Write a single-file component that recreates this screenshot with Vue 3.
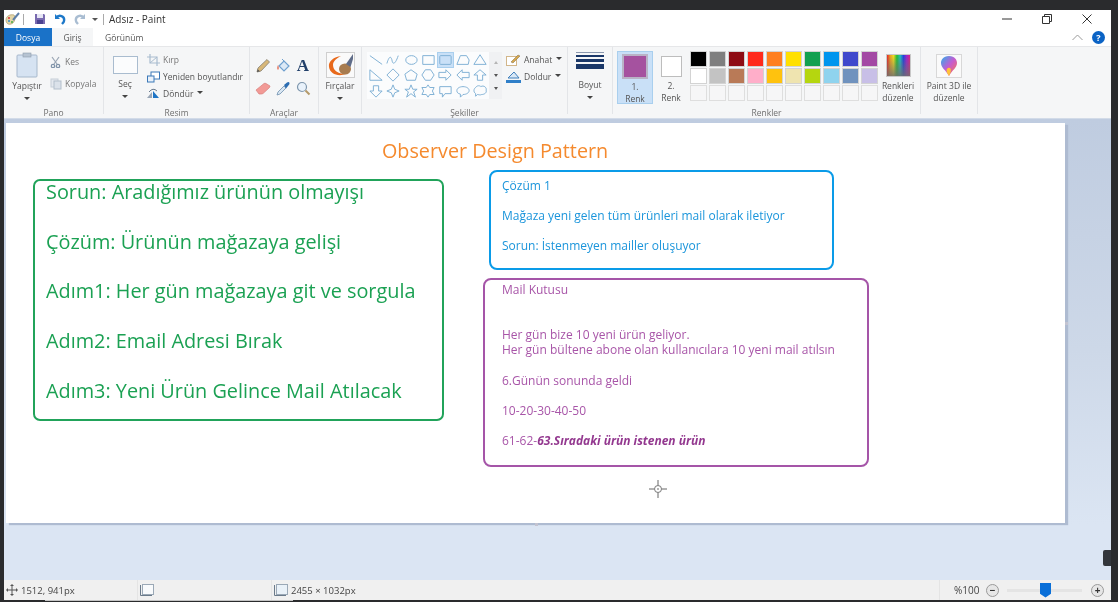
<script setup>
const shapes = [
  'M2 3L16 13', 'M2 12C5 2 7 4 8 9S12 12 15 3', 'M3 8a6.5 5 0 1 0 13 0a6.5 5 0 1 0-13 0Z', 'M3 3H16V13H3Z', 'M3 4Q3 3 4 3H15Q16 3 16 4V12Q16 13 15 13H4Q3 13 3 12Z', 'M2 13L6 3H13L16 8L15 13Z', 'M9 2L16 13H2Z',
  'M2 2L16 14H2Z', 'M9 1L16 8L9 15L2 8Z', 'M9 2L16 7L14 14H4L2 7Z', 'M6 2H12L16 8L12 14H6L2 8Z', 'M2 5H10V2L16 8L10 14V11H2Z', 'M16 5H8V2L2 8L8 14V11H16Z', 'M9 2L16 8H12V14H6V8H2Z',
  'M6 2H12V8H16L9 15L2 8H6Z', 'M9 1L11 6L16 8L11 10L9 15L7 10L2 8L7 6Z', 'M9 1L11 6H16L12 9L14 15L9 11L4 15L6 9L2 6H7Z', 'M9 1L11 4H16L14 8L16 12H11L9 15L7 12H2L4 8L2 4H7Z', 'M3 3H16V11H9L6 15V11H3Z', 'M9 3C13 3 16 5 16 7.500S13 12 9 12L6 15V11.500C3 11 2 9.500 2 7.500C2 5 5 3 9 3Z', 'M4 4C6 1 9 2 10 3C13 1 17 4 16 7C17 10 14 12 11 12C9 13 7 12 6 12L4 14V11C1 9 2 5 4 4Z'
]
const colours = [
  '#000000', '#7f7f7f', '#8e0c14', '#ff2a1c', '#ff7f1f', '#ffe000', '#12a050', '#0095ee', '#3f48cc', '#a349a4',
  '#ffffff', '#c3c3c3', '#b97a57', '#ffaec9', '#ffc20e', '#efe4b0', '#b5d60f', '#8fd3ee', '#7092be', '#c8bfe7',
  '', '', '', '', '', '', '', '', '', ''
]
const greenText = `Sorun: Aradığımız ürünün olmayışı

Çözüm: Ürünün mağazaya gelişi

Adım1: Her gün mağazaya git ve sorgula

Adım2: Email Adresi Bırak

Adım3: Yeni Ürün Gelince Mail Atılacak`
const blueText = `Çözüm 1

Mağaza yeni gelen tüm ürünleri mail olarak iletiyor

Sorun: İstenmeyen mailler oluşuyor`
const mailText = `Mail Kutusu


Her gün bize 10 yeni ürün geliyor.
Her gün bültene abone olan kullanıcılara 10 yeni mail atılsın

6.Günün sonunda geldi

10-20-30-40-50

61-62-`
</script>

<template>
  <div class="screen">
    <div class="window">
      <div class="titlebar">
        <svg class="qa-app" width="15" height="14" viewBox="0 0 15 14"><path d="M1 8C1 4 5 2 9 3C11 5 10 11 6 12C3 13 1 11 1 8Z" fill="#e3d6a8" stroke="#a9986a" stroke-width=".7"/><path d="M8 8L14 1" stroke="#5d7fa8" stroke-width="2"/><circle cx="4" cy="6" r="1" fill="#d33"/><circle cx="4" cy="9" r="1" fill="#38c"/><circle cx="7" cy="10" r="1" fill="#4a4"/></svg>
        <span class="qa-sep"></span>
        <svg class="qa-save" width="12" height="12" viewBox="0 0 12 12"><path d="M1 1H10L11 2V11H1Z" fill="#7a6bb0"/><path d="M3 1H9V5H3Z" fill="#e6e6f4"/><path d="M3 7H9V11H3Z" fill="#4b4290"/></svg>
        <svg class="qa-undo" width="12" height="12" viewBox="0 0 12 12"><path d="M1 1V6H6" fill="#1d78c9"/><path d="M2 5C5 1 11 3 10 8C10 9 9 10 8 11" fill="none" stroke="#1d78c9" stroke-width="2.400"/></svg>
        <svg class="qa-redo" width="12" height="12" viewBox="0 0 12 12"><path d="M11 1V6H6" fill="#a9bdd2"/><path d="M10 5C7 1 1 3 2 8C2 9 3 10 4 11" fill="none" stroke="#a9bdd2" stroke-width="2.400"/></svg>
        <span class="qa-more"></span>
        <span class="qa-sep qa-sep-last"></span>
        <span class="app-title">Adsız - Paint</span>
        <div class="win-controls">
          <svg width="10" height="10" viewBox="0 0 10 10"><path d="M0 5H10" stroke="#333" stroke-width="1"/></svg>
          <svg width="10" height="10" viewBox="0 0 10 10"><path d="M.5 2.500H7.500V9.500H.5ZM2.500 2.500V.5H9.500V7.500H7.500" fill="none" stroke="#333"/></svg>
          <svg width="10" height="10" viewBox="0 0 10 10"><path d="M.5 .5L9.500 9.500M9.500 .5L.5 9.500" stroke="#333"/></svg>
        </div>
      </div>

      <div class="tabs">
        <span class="tab tab-file">Dosya</span>
        <span class="tab tab-active">Giriş</span>
        <span class="tab tab-view">Görünüm</span>
        <svg class="collapse" width="11" height="7" viewBox="0 0 11 7"><path d="M.5 6L5.500 1L10.500 6" fill="none" stroke="#9a9a9a"/></svg>
        <span class="help">?</span>
      </div>

      <div class="ribbon">
        <section class="group g-pano">
          <div class="group-body">
            <div class="big-btn paste">
              <svg width="22" height="26" viewBox="0 0 22 26"><rect x="1" y="3" width="20" height="22" rx="1" fill="#d6e3f2" stroke="#a7b8cc"/><rect x="7" y="1" width="8" height="4" fill="#b6c3d2" stroke="#8e9cac" stroke-width=".6"/></svg>
              <span class="big-label">Yapıştır</span>
              <span class="caret"></span>
            </div>
            <div class="small-col faded">
              <div class="small-row"><svg width="11" height="12" viewBox="0 0 11 12"><path d="M2 1L7 8M9 1L4 8" stroke="#9aa6b4" stroke-width="1.200"/><circle cx="3" cy="10" r="1.700" fill="none" stroke="#7f92a8" stroke-width="1.200"/><circle cx="8" cy="10" r="1.700" fill="none" stroke="#7f92a8" stroke-width="1.200"/></svg>Kes</div>
              <div class="small-row"><svg width="12" height="12" viewBox="0 0 12 12"><rect x="1" y="1" width="7" height="8" fill="#e4e9ef" stroke="#c6ced8"/><rect x="4" y="3" width="7" height="8" fill="#dbe2ea" stroke="#b3bfcc"/></svg>Kopyala</div>
            </div>
          </div>
          <span class="group-label">Pano</span>
        </section>

        <section class="group g-resim">
          <div class="group-body">
            <div class="big-btn select">
              <span class="select-box"></span>
              <span class="big-label">Seç</span>
              <span class="caret"></span>
            </div>
            <div class="small-col resim-col">
              <div class="small-row faded"><svg width="13" height="12" viewBox="0 0 13 12"><path d="M3 0V9H13M0 3H10V12" fill="none" stroke="#a9bccf" stroke-width="1.200"/><path d="M3 9L10 3" stroke="#a9bccf"/></svg>Kırp</div>
              <div class="small-row"><svg width="13" height="12" viewBox="0 0 13 12"><rect x="4" y="1" width="8.500" height="7" fill="#fff" stroke="#3b78b8"/><rect x=".5" y="5" width="6.500" height="6" fill="#e9f1fa" stroke="#3b78b8"/></svg>Yeniden boyutlandır</div>
              <div class="small-row"><svg width="13" height="11" viewBox="0 0 13 11"><path d="M6 3L12 10H6Z" fill="#1f75c5"/><path d="M5 4V10H0Z" fill="#99a6b6"/><path d="M2 4Q6 -1 10 3" fill="none" stroke="#6a7a8c"/></svg>Döndür<span class="caret inline"></span></div>
            </div>
          </div>
          <span class="group-label">Resim</span>
        </section>

        <section class="group g-tools">
          <div class="tool-grid">
            <svg width="15" height="15" viewBox="0 0 15 15"><path d="M1 14L2 10L11 1.500L13.500 4L5 13Z" fill="#d8b778" stroke="#857f72" stroke-width=".8"/><path d="M1 14L1.700 11.300L3.800 13.300Z" fill="#555"/></svg>
            <svg width="15" height="15" viewBox="0 0 15 15"><path d="M3 8L8 3L13 8L8 13Z" fill="#dce9f6" stroke="#6fa0cf" stroke-width="1.200"/><path d="M6 1L8 3" stroke="#6fa0cf"/><path d="M2 7C1 9 0.500 11 2 12C3.500 11 3 9 2 7Z" fill="#e8836f"/></svg>
            <span class="tool-a">A</span>
            <svg width="16" height="13" viewBox="0 0 16 13"><path d="M1 8L9 1.500Q10 1 11 1.500L15 4Q15 5 14 6L8 11.500Q7 12 6 12H4Z" fill="#f29a96" stroke="#d9807c" stroke-width=".7"/></svg>
            <svg width="15" height="15" viewBox="0 0 15 15"><path d="M1 14L2 11L8 5L10 7L4 13Z" fill="#d9e6f2" stroke="#6f8fae" stroke-width=".8"/><path d="M8 4L11 1.500Q13 0.500 13.500 2Q14 3 12 5L10 7.500Z" fill="#2c6db2"/></svg>
            <svg width="15" height="15" viewBox="0 0 15 15"><circle cx="6" cy="6" r="4.500" fill="#e9f2fb" stroke="#7f97ae" stroke-width="1.200"/><path d="M9.500 9.500L13.500 13.500" stroke="#b49a6a" stroke-width="2"/></svg>
          </div>
          <span class="group-label">Araçlar</span>
        </section>

        <section class="group g-brush">
          <div class="big-btn brush">
            <svg class="brush-icon" width="29" height="26" viewBox="0 0 29 26"><rect x=".5" y=".5" width="28" height="25" fill="#fafafa" stroke="#cfcfcf"/><path d="M15 4C8 5 2 9 3 15C4 22 12 25 20 22C13 22 7 19 7 13C7 9 11 6 15 4Z" fill="#e8691b"/><ellipse cx="19" cy="17" rx="6" ry="5.500" fill="#a87c4f"/><path d="M20 12L27 2V7L24.500 15Z" fill="#5f6c88"/></svg>
            <span class="big-label">Fırçalar</span>
            <span class="caret"></span>
          </div>
        </section>

        <section class="group g-shapes">
          <div class="group-body">
            <div class="shape-gallery">
              <span v-for="(d, i) in shapes" :key="i" class="shape-cell" :class="{ picked: i === 4 }">
                <svg width="16" height="14" viewBox="0 0 18 16"><path :d="d" fill="none" stroke="#7fb0d4" stroke-width="1.100"/></svg>
              </span>
            </div>
            <div class="gallery-scroll">
              <span class="tri-up"></span>
              <span class="tri-down"></span>
              <span class="tri-down"></span>
            </div>
            <div class="small-col shape-col">
              <div class="small-row"><svg width="15" height="12" viewBox="0 0 15 12"><rect x=".5" y="2.500" width="10" height="9" fill="#fff" stroke="#d2b68a"/><path d="M5 8L12 1L14 2L7 9Z" fill="#d8a74a" stroke="#7a6a4a" stroke-width=".5"/></svg>Anahat<span class="caret inline"></span></div>
              <div class="small-row"><svg width="15" height="12" viewBox="0 0 15 12"><path d="M3 6L8 1L13 7H2Z" fill="#d9e8f6" stroke="#3f7fbc"/><rect x="0" y="9" width="15" height="3" fill="#2f7fc9"/></svg>Doldur<span class="caret inline"></span></div>
            </div>
          </div>
          <span class="group-label">Şekiller</span>
        </section>

        <section class="group g-size">
          <div class="big-btn size">
            <div class="size-lines">
              <i class="w1"></i><i class="w2"></i><i class="w3"></i><i class="w4"></i>
            </div>
            <span class="big-label">Boyut</span>
            <span class="caret"></span>
          </div>
        </section>

        <section class="group g-colours">
          <div class="group-body">
            <div class="colour-btn active">
              <span class="colour-one"></span>
              <span class="colour-label">1.<br>Renk</span>
            </div>
            <div class="colour-btn">
              <span class="colour-two"></span>
              <span class="colour-label">2.<br>Renk</span>
            </div>
            <div class="palette">
              <span v-for="(c, i) in colours" :key="i" class="swatch" :class="{ blank: !c }" :style="{ backgroundColor: c }"></span>
            </div>
            <div class="edit-colours">
              <span class="spectrum"></span>
              <span class="colour-label">Renkleri<br>düzenle</span>
            </div>
          </div>
          <span class="group-label">Renkler</span>
        </section>

        <section class="group g-3d">
          <div class="edit-3d">
            <span class="icon-3d">
              <svg width="20" height="22" viewBox="0 0 20 22">
                <defs><linearGradient id="drop" x1="0" y1="0" x2="1" y2="1"><stop offset="0" stop-color="#2ab0ee"/><stop offset=".5" stop-color="#c65bd0"/><stop offset="1" stop-color="#ff7a3c"/></linearGradient></defs>
                <path d="M10 1C16 1 18 5 18 8C18 13 13 15 10 21C7 15 2 13 2 8C2 5 4 1 10 1Z" fill="url(#drop)"/>
                <path d="M10 21C7 17 7 14 9 13C12 12 13 15 10 21Z" fill="#ffc43a"/>
              </svg>
            </span>
            <span class="colour-label">Paint 3D ile<br>düzenle</span>
          </div>
        </section>
      </div>

      <div class="workspace">
        <div class="sheet">
          <h1 class="drawing-title">Observer Design Pattern</h1>
          <div class="note note-green"><div class="green-lines">{{ greenText }}</div></div>
          <div class="note note-blue">{{ blueText }}</div>
          <div class="note note-purple">{{ mailText }}<b><i>63.Sıradaki ürün istenen ürün</i></b></div>
          <svg class="crosshair" width="18" height="18" viewBox="0 0 18 18"><circle cx="9" cy="9" r="3.500" fill="none" stroke="#777"/><path d="M9 0V5M9 13V18M0 9H5M13 9H18" stroke="#666"/><circle cx="9" cy="9" r=".8" fill="#555"/></svg>
          <span class="grip grip-right"></span>
          <span class="grip grip-bottom"></span>
        </div>
        <span class="side-handle"></span>
      </div>

      <div class="statusbar">
        <div class="st st-pos">
          <svg width="12" height="12" viewBox="0 0 12 12"><path d="M6 1V11M1 6H11" stroke="#555"/><path d="M6 0L8 2H4ZM6 12L8 10H4ZM0 6L2 4V8ZM12 6L10 4V8Z" fill="#555"/></svg>
          1512, 941px
        </div>
        <div class="st st-sel">
          <svg width="14" height="12" viewBox="0 0 14 12"><rect x="2.500" y=".5" width="11" height="10" fill="#f8fafc" stroke="#9aa8b6"/><path d="M.5 1V11.500H12" fill="none" stroke="#6a7a8a"/></svg>
        </div>
        <div class="st st-size">
          <svg width="14" height="12" viewBox="0 0 14 12"><rect x="2.500" y=".5" width="11" height="10" fill="#e9f1f8" stroke="#9aa8b6"/><path d="M.5 1V11.500H12" fill="none" stroke="#6a7a8a"/></svg>
          2455 × 1032px
        </div>
        <div class="st-zoom">
          <span class="zoom-value">%100</span>
          <span class="zoom-btn">−</span>
          <div class="slider"><span class="thumb"></span></div>
          <span class="zoom-btn">+</span>
        </div>
      </div>
    </div>
  </div>
</template>

<style>
html, body { margin: 0; background: #2a2b2d; overflow: hidden; }
</style>

<style scoped>
.screen {
  position: relative;
  width: 1118px;
  height: 602px;
  box-sizing: border-box;
  padding: 10px 7px 2px 4px;
  background: #2a2b2d;
  font-family: "Open Sans", "Noto Sans", sans-serif;
  color: #444;
  filter: blur(0.35px);
}
.screen::after {
  content: "";
  position: absolute;
  left: 45px;
  bottom: 1px;
  width: 248px;
  height: 1px;
  background: #c4c4c4;
}
.window {
  height: 100%;
  display: flex;
  flex-direction: column;
  background: #fff;
}

/* title bar */
.titlebar {
  height: 18px;
  flex: none;
  display: flex;
  align-items: center;
  background: #fff;
}
.qa-app { margin-left: 1px; }
.qa-sep { width: 1px; height: 11px; background: #aaa; margin-left: 3px; }
.qa-save { margin-left: 10px; }
.qa-undo { margin-left: 8px; }
.qa-redo { margin-left: 8px; }
.qa-more {
  margin-left: 6px;
  width: 0;
  height: 0;
  border-left: 3px solid transparent;
  border-right: 3px solid transparent;
  border-top: 3px solid #555;
}
.qa-sep-last { margin-left: 5px; }
.app-title { margin-left: 5px; font-size: 10px; color: #333; }
.win-controls {
  margin-left: auto;
  display: flex;
  gap: 30px;
  padding-right: 19px;
}

/* tabs */
.tabs {
  height: 18px;
  flex: none;
  display: flex;
  align-items: center;
  font-size: 8.500px;
  color: #555;
}
.tab { height: 100%; display: flex; align-items: center; justify-content: center; }
.tab-file { width: 48px; background: #1a72c8; color: #fff; }
.tab-active { width: 41px; background: #f5f6f7; }
.tab-view { margin-left: 12px; }
.collapse { margin-left: auto; margin-right: 9px; }
.help {
  width: 13px;
  height: 13px;
  margin-right: 6px;
  border-radius: 50%;
  background: #0b63c5;
  color: #fff;
  font-size: 9px;
  font-weight: 700;
  text-align: center;
  line-height: 13px;
}

/* ribbon */
.ribbon {
  height: 72px;
  flex: none;
  display: flex;
  box-sizing: border-box;
  background: #f5f6f7;
  border-top: 1px solid #e6e7e9;
  font-size: 8.500px;
  color: #555;
}
.group {
  position: relative;
  flex: none;
  box-sizing: border-box;
  height: 67px;
  border-right: 1px solid #e3e5e8;
}
.group-body { display: flex; }
.group-label {
  position: absolute;
  left: 0;
  right: 0;
  top: 60px;
  text-align: center;
  line-height: 12px;
  color: #707070;
}
.g-pano { width: 100px; }
.g-resim { width: 146px; }
.g-tools { width: 69px; }
.g-brush { width: 43px; }
.g-shapes { width: 206px; }
.g-size { width: 45px; }
.g-colours { width: 308px; }
.g-3d { width: 57px; }

.big-btn {
  display: flex;
  flex-direction: column;
  align-items: center;
  color: #555;
}
.big-label { line-height: 12px; }
.caret {
  width: 0;
  height: 0;
  margin-top: 5px;
  border-left: 3px solid transparent;
  border-right: 3px solid transparent;
  border-top: 3px solid #444;
}
.caret.inline { display: inline-block; margin: 0 0 2px 1px; }
.paste { width: 46px; padding-top: 5px; }
.paste svg { margin-bottom: 2px; }
.small-col { display: flex; flex-direction: column; padding-top: 6px; }
.small-col.faded { margin-left: 0; color: #777; }
.small-row {
  display: flex;
  align-items: center;
  gap: 3px;
  height: 17px;
  white-space: nowrap;
}
.small-row svg { flex: none; }
.small-row.faded { color: #777; }
.g-pano .small-row { margin-bottom: 5px; gap: 4px; }
.g-pano .small-row:last-child { gap: 3px; }
.select { width: 42px; padding-top: 9px; }
.select-box {
  width: 25px;
  height: 18px;
  box-sizing: border-box;
  border: 1px solid #a9bccf;
  background: #fbfcfd;
  margin-bottom: 4px;
}
.resim-col { margin-left: 1px; padding-top: 4px; }
.g-tools .tool-grid {
  display: grid;
  grid-template-columns: repeat(3, 20px);
  grid-auto-rows: 23px;
  justify-items: center;
  align-items: center;
  padding: 7px 0 0 3px;
}
.tool-a {
  font-family: "Liberation Serif", serif;
  font-size: 17px;
  font-weight: 700;
  color: #22406a;
  line-height: 1;
}
.brush { padding-top: 5px; }
.brush-icon { margin-bottom: 2px; }
.shape-gallery {
  margin: 5px 0 0 5px;
  width: 122px;
  height: 47px;
  display: grid;
  grid-template-columns: repeat(7, 1fr);
  grid-template-rows: repeat(3, 1fr);
  background: #fbfcfd;
}
.shape-cell { display: flex; align-items: center; justify-content: center; }
.shape-cell.picked { background: #c9e0f7; outline: 1px solid #a9cfee; outline-offset: -1px; }
.gallery-scroll {
  width: 13px;
  height: 47px;
  margin-top: 5px;
  box-sizing: border-box;
  display: flex;
  flex-direction: column;
  align-items: center;
  justify-content: space-around;
  background: #f0f1f3;
  padding: 4px 0;
}
.tri-up, .tri-down {
  width: 0;
  height: 0;
  border-left: 2.500px solid transparent;
  border-right: 2.500px solid transparent;
}
.tri-up { border-bottom: 3px solid #b5b5b5; }
.tri-down { border-top: 3px solid #555; }
.shape-col { margin-left: 4px; padding-top: 4px; }
.size { padding-top: 5px; }
.size-lines {
  width: 28px;
  height: 23px;
  margin-bottom: 4px;
  display: flex;
  flex-direction: column;
  gap: 2px;
}
.size-lines i { display: block; background: #1a3768; }
.size-lines .w1 { height: 1px; background: #8a97ad; }
.size-lines .w2 { height: 2px; }
.size-lines .w3 { height: 3px; }
.size-lines .w4 { height: 5px; }

.colour-btn {
  width: 36px;
  height: 53px;
  box-sizing: border-box;
  margin-top: 4px;
  display: flex;
  flex-direction: column;
  align-items: center;
  text-align: center;
}
.g-colours .colour-btn.active {
  margin-left: 4px;
  background: #c9e0f7;
  border: 1px solid #a9cfee;
  padding-top: 2px;
}
.colour-btn:not(.active) { margin-left: 0; width: 36px; padding-top: 5px; }
.colour-one {
  width: 26px;
  height: 25px;
  flex: none;
  box-sizing: border-box;
  background: #a5529f;
  border: 2px solid #b9b3c6;
  margin-bottom: 1px;
}
.colour-two {
  width: 21px;
  height: 21px;
  flex: none;
  box-sizing: border-box;
  background: #fff;
  border: 1px solid #bdbdbd;
  margin-bottom: 2px;
}
.colour-label { line-height: 12px; white-space: nowrap; text-align: center; }
.colour-btn .colour-label { margin-top: 1px; }
.palette {
  margin: 4px 0 0 1px;
  display: grid;
  grid-template-columns: repeat(10, 17px);
  grid-auto-rows: 16px;
  gap: 1px 2px;
}
.swatch { display: block; box-sizing: border-box; border: 1px solid #d3d3d3; }
.swatch.blank { background: #f6f6f7; border: 1px solid #dedede; }
.edit-colours {
  width: 36px;
  margin: 7px 0 0 2px;
  display: flex;
  flex-direction: column;
  align-items: center;
}
.spectrum {
  width: 25px;
  height: 23px;
  margin-bottom: 3px;
  box-sizing: border-box;
  border: 1px solid #c8c8c8;
  background:
    linear-gradient(to bottom, rgba(255,255,255,0), rgba(110,110,110,0.85)),
    linear-gradient(to right, #e8202a, #f0a020, #f0e020, #20c030, #20c0c0, #2040e0, #a020d0, #e02080);
}
.edit-3d {
  margin-top: 7px;
  display: flex;
  flex-direction: column;
  align-items: center;
}
.icon-3d {
  width: 26px;
  height: 24px;
  margin-bottom: 2px;
  box-sizing: border-box;
  border: 1px solid #d8d8d8;
  background: #fafafa;
  display: flex;
  align-items: center;
  justify-content: center;
}

/* canvas area */
.workspace {
  position: relative;
  flex: 1;
  min-height: 0;
  background: linear-gradient(to bottom, #bfcce0 0, #cdd8e8 50%, #dbe5f3 88%);
  border-top: 1px solid #d2dbe8;
  box-sizing: border-box;
  padding: 4px 0 0 2px;
}
.sheet {
  position: relative;
  width: 1059px;
  height: 400px;
  background: #fff;
  box-shadow: 3px 2px 1px #aebbd1;
}
.drawing-title {
  position: absolute;
  left: 376px;
  top: 15px;
  margin: 0;
  font-size: 19.750px;
  font-weight: 400;
  line-height: 26px;
  color: #f58a2e;
  white-space: nowrap;
}
.note {
  position: absolute;
  box-sizing: border-box;
  white-space: pre-wrap;
}
.note-green {
  left: 27px;
  top: 56px;
  width: 411px;
  height: 242px;
  padding: 0 0 0 11px;
  border: 2.500px solid #21a35a;
  border-radius: 7px;
  color: #1ba153;
}
.green-lines {
  margin-top: -1px;
  font-size: 19.850px;
  line-height: 24.850px;
}
.note-blue {
  left: 483px;
  top: 47px;
  width: 345px;
  height: 99.500px;
  padding: 6px 0 0 11px;
  border: 2.500px solid #0a9be8;
  border-radius: 8px;
  color: #1b95db;
  font-size: 12px;
  line-height: 15.100px;
}
.note-purple {
  left: 477px;
  top: 154.500px;
  width: 386px;
  height: 189px;
  padding: 2.500px 0 0 17px;
  border: 2.500px solid #a555a8;
  border-radius: 8px;
  color: #a855a8;
  font-size: 12px;
  line-height: 15.100px;
}
.note-purple b { color: #93388f; }
.crosshair { position: absolute; left: 643px; top: 357px; }
.grip {
  position: absolute;
  width: 3px;
  height: 3px;
  background: #c3c3d0;
}
.grip-right { left: 1059px; top: 199px; }
.grip-bottom { left: 529px; top: 400px; }
.side-handle {
  position: absolute;
  right: 0;
  top: 431px;
  width: 8px;
  height: 16px;
  border-radius: 2px 0 0 2px;
  background: #33363b;
}

/* status bar */
.statusbar {
  height: 20px;
  flex: none;
  display: flex;
  align-items: center;
  box-sizing: border-box;
  background: #f0f0f0;
  font-size: 9.500px;
  color: #444;
}
.st {
  height: 100%;
  display: flex;
  align-items: center;
  gap: 3px;
  box-sizing: border-box;
  border-right: 1px solid #e4e4e4;
}
.st-pos { width: 134px; padding-left: 2px; }
.st-sel { width: 134px; padding-left: 2px; }
.st-size { width: 668px; padding-left: 2px; }
.st-zoom { flex: 1; display: flex; align-items: center; padding-left: 14px; }
.zoom-value { width: 32px; font-size: 10px; }
.zoom-btn {
  width: 13px;
  height: 13px;
  box-sizing: border-box;
  border: 1px solid #9a9a9a;
  border-radius: 50%;
  background: #e6e6e6;
  color: #333;
  font-size: 10px;
  font-weight: 700;
  line-height: 10px;
  text-align: center;
}
.slider {
  position: relative;
  width: 75px;
  height: 3px;
  margin: 0 9px 0 8px;
  background: #e4e4e4;
}
.thumb {
  position: absolute;
  left: 33px;
  top: -6px;
  width: 11px;
  height: 15px;
  background: #0a6fd8;
  clip-path: polygon(0 0, 100% 0, 100% 75%, 50% 100%, 0 75%);
}
</style>
